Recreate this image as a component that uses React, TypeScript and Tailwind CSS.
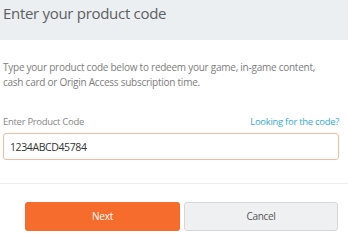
import React from "react";

const App = () => {
  return (
    <div
      className="w-[348px] h-[234px] bg-white overflow-hidden"
      style={{ fontFamily: '"Open Sans", sans-serif' }}
    >
      <header className="h-[40px] bg-[#eceff1] pl-[3px] pt-[3px]">
        <h1 className="text-[15px] leading-[20px] tracking-[-0.3px] text-[#5b5f62] font-normal">
          Enter your product code
        </h1>
      </header>
      <div className="pl-[3px] pr-[8px]">
        <p className="mt-[20px] text-[10px] leading-[15px] tracking-[-0.25px] text-[#7d7d7d]">
          Type your product code below to redeem your game, in-game content,
          <br />
          cash card or Origin Access subscription time.
        </p>
        <div className="mt-[25px] flex justify-between items-center text-[9.5px] leading-[14px] tracking-[-0.3px] pr-[1px]">
          <label className="text-[#888]">Enter Product Code</label>
          <a className="text-[#35a9d3]" href="#">
            Looking for the code?
          </a>
        </div>
        <input
          className="mt-[4px] w-[336px] h-[27px] border border-[#f1bc9e] rounded-[3px] px-[6px] text-[10.5px] tracking-[-0.4px] text-[#333] outline-none"
          defaultValue="1234ABCD45784"
        />
      </div>
      <div className="mt-[23px] border-t border-[#eeeeee]" />
      <div className="flex gap-[4px] pl-[25px] pr-[10px] mt-[18px]">
        <button className="w-[155px] h-[29px] rounded-[3px] bg-[#f56c2d] text-white text-[10px] tracking-[-0.2px]">
          Next
        </button>
        <button className="flex-1 h-[29px] rounded-[3px] bg-[#eef0f2] border border-[#d5d8db] text-[#555] text-[10px] tracking-[-0.3px]">
          Cancel
        </button>
      </div>
    </div>
  );
};

export default App;
